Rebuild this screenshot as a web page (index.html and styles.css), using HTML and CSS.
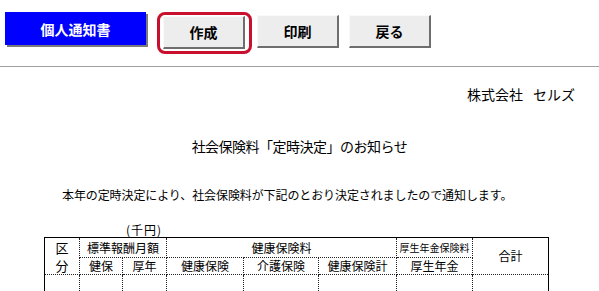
FILE: index.html
```html
<!DOCTYPE html>
<html lang="ja">
<head>
<meta charset="utf-8">
<title>個人通知書</title>
<link rel="stylesheet" href="styles.css">
</head>
<body>
<div class="toolbar">
  <div class="btn-blue">個人通知書</div>
  <div class="highlight"><div class="btn">作成</div></div>
  <div class="btn btn-print">印刷</div>
  <div class="btn btn-back">戻る</div>
</div>
<div class="company"><span>株式会社</span><span>セルズ</span></div>
<div class="title">社会保険料「定時決定」のお知らせ</div>
<div class="lead">本年の定時決定により、社会保険料が下記のとおり決定されましたので通知します。</div>
<div class="unit">(千円)</div>
<table class="grid">
  <colgroup>
    <col class="c1"><col class="c2"><col class="c3"><col class="c4"><col class="c5"><col class="c6"><col class="c7"><col class="c8">
  </colgroup>
  <tr class="r1">
    <td rowspan="2" class="kubun"><div class="k1">区</div><div class="k2">分</div></td>
    <td colspan="2">標準報酬月額</td>
    <td colspan="3">健康保険料</td>
    <td class="small">厚生年金保険料</td>
    <td rowspan="2">合計</td>
  </tr>
  <tr class="r2">
    <td>健保</td>
    <td>厚年</td>
    <td>健康保険</td>
    <td>介護保険</td>
    <td>健康保険計</td>
    <td>厚生年金</td>
  </tr>
  <tr class="r3">
    <td></td><td></td><td></td><td></td><td></td><td></td><td></td><td></td>
  </tr>
</table>
</body>
</html>
```

FILE: styles.css
```css
html, body {
  margin: 0;
  background: #fff;
  color: #000;
  font-family: "Noto Sans CJK JP", "Noto Sans", sans-serif;
}

.toolbar {
  display: flex;
  align-items: flex-start;
  height: 66px;
  padding-left: 5px;
  border-bottom: 1px solid #a0a0a0;
}

.btn-blue {
  margin-top: 12px;
  width: 141px;
  height: 33px;
  background: #0000ff;
  color: #fff;
  font-weight: bold;
  font-size: 14px;
  display: flex;
  align-items: center;
  justify-content: center;
  box-shadow: 2px 2px 0 #7a7a7a;
}

.highlight {
  margin-top: 12px;
  margin-left: 11px;
  border: 3px solid #c8102e;
  border-radius: 8px;
  padding: 1px 4px 2px 3px;
}

.btn {
  box-sizing: border-box;
  width: 82px;
  height: 33px;
  background: #ededed;
  border-style: solid;
  border-width: 1px 2px 2px 1px;
  border-color: #fafafa #6e6e6e #6e6e6e #fafafa;
  font-weight: bold;
  font-size: 14px;
  display: flex;
  align-items: center;
  justify-content: center;
}

.btn-print {
  margin-top: 15px;
  margin-left: 5px;
}

.btn-back {
  margin-top: 15px;
  margin-left: 10px;
}

.company {
  display: flex;
  justify-content: flex-end;
  gap: 10px;
  margin-top: 17px;
  padding-right: 24px;
  font-size: 14px;
  line-height: 20px;
}

.title {
  margin-top: 32px;
  text-align: center;
  font-size: 14px;
  line-height: 20px;
  letter-spacing: -0.5px;
}

.lead {
  margin-top: 31px;
  padding-left: 62px;
  font-size: 12px;
  line-height: 16px;
  letter-spacing: -0.1px;
}

.unit {
  margin-top: 20px;
  padding-left: 126px;
  font-size: 12px;
  line-height: 14px;
  letter-spacing: 1px;
}

.grid {
  margin-left: 44px;
  border-collapse: collapse;
  table-layout: fixed;
  width: 504px;
  font-size: 12px;
  line-height: 1;
}

.grid col.c1 { width: 35px; }
.grid col.c2 { width: 43px; }
.grid col.c3 { width: 44px; }
.grid col.c4 { width: 77px; }
.grid col.c5 { width: 75px; }
.grid col.c6 { width: 78px; }
.grid col.c7 { width: 76px; }
.grid col.c8 { width: 76px; }

.grid td {
  padding: 0;
  text-align: center;
  border: 1px dotted #222;
  white-space: nowrap;
  overflow: hidden;
}

.grid tr.r1 td { border-top: 1px solid #000; }
.grid tr td:first-child { border-left: 1px solid #000; }
.grid tr td:last-child { border-right: 1px solid #000; }
.grid tr.r2 td:last-child { border-right: 1px dotted #222; }
.grid tr.r2 td:first-child { border-left: 1px dotted #222; }

.grid tr.r1 { height: 20px; }
.grid tr.r2 { height: 17px; }
.grid tr.r3 { height: 24px; }

.grid td.small {
  font-size: 10px;
}

.grid td.kubun {
  vertical-align: top;
  font-size: 13px;
}

.grid td.kubun div {
  line-height: 13px;
  height: 13px;
}

.grid td.kubun .k1 {
  margin-top: 3px;
}

.grid td.kubun .k2 {
  margin-top: 5px;
}
```
